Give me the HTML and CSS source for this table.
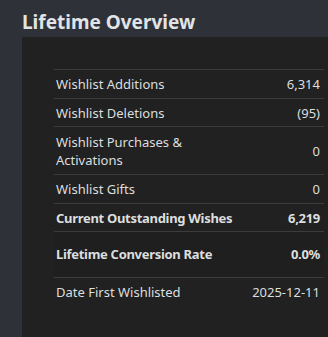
FILE: index.html
```html
<!DOCTYPE html>
<html>
<head>
<meta charset="utf-8">
<link rel="stylesheet" href="styles.css">
</head>
<body>
<div class="page">
  <h2 class="title">Lifetime Overview</h2>
  <div class="panel">
    <div class="table">
      <div class="row"><span class="label">Wishlist Additions</span><span class="value">6,314</span></div>
      <div class="row"><span class="label">Wishlist Deletions</span><span class="value">(95)</span></div>
      <div class="row multi"><span class="label">Wishlist Purchases &amp; Activations</span><span class="value">0</span></div>
      <div class="row"><span class="label">Wishlist Gifts</span><span class="value">0</span></div>
      <div class="row bold"><span class="label">Current Outstanding Wishes</span><span class="value">6,219</span></div>
      <div class="row bold tall"><span class="label">Lifetime Conversion Rate</span><span class="value">0.0%</span></div>
      <div class="row"><span class="label">Date First Wishlisted</span><span class="value">2025-12-11</span></div>
    </div>
  </div>
</div>
</body>
</html>
```
FILE: styles.css
```css
html, body {
  margin: 0;
  padding: 0;
  background: #2f3139;
  height: 100%;
  overflow: hidden;
}
.page {
  padding: 10px 0 0 22px;
  font-family: "Noto Sans", "Open Sans", sans-serif;
  color: #dcdedf;
}
.title {
  margin: 0;
  font-size: 19px;
  line-height: 24px;
  font-weight: 700;
  color: #e1e4e6;
  height: 27px;
}
.panel {
  box-sizing: border-box;
  background: #212121;
  padding: 32px 4px 20px 32px;
  height: 300px;
  border-top-left-radius: 2px;
}
.table {
  display: flex;
  flex-direction: column;
}
.row {
  display: flex;
  justify-content: space-between;
  align-items: center;
  gap: 16px;
  border-top: 1px solid #3c3c3c;
  padding: 5px 4px 4.5px 2px;
  font-size: 13px;
  line-height: 18px;
}
.row .label {
  max-width: 186px;
}
.row .value {
  text-align: right;
  white-space: nowrap;
}
.multi {
  padding-top: 6px;
  padding-bottom: 5px;
}
.bold {
  font-weight: 700;
  letter-spacing: -0.3px;
}
.tall {
  padding-top: 13px;
  padding-bottom: 14px;
  background: #1f1f1f;
}
```
